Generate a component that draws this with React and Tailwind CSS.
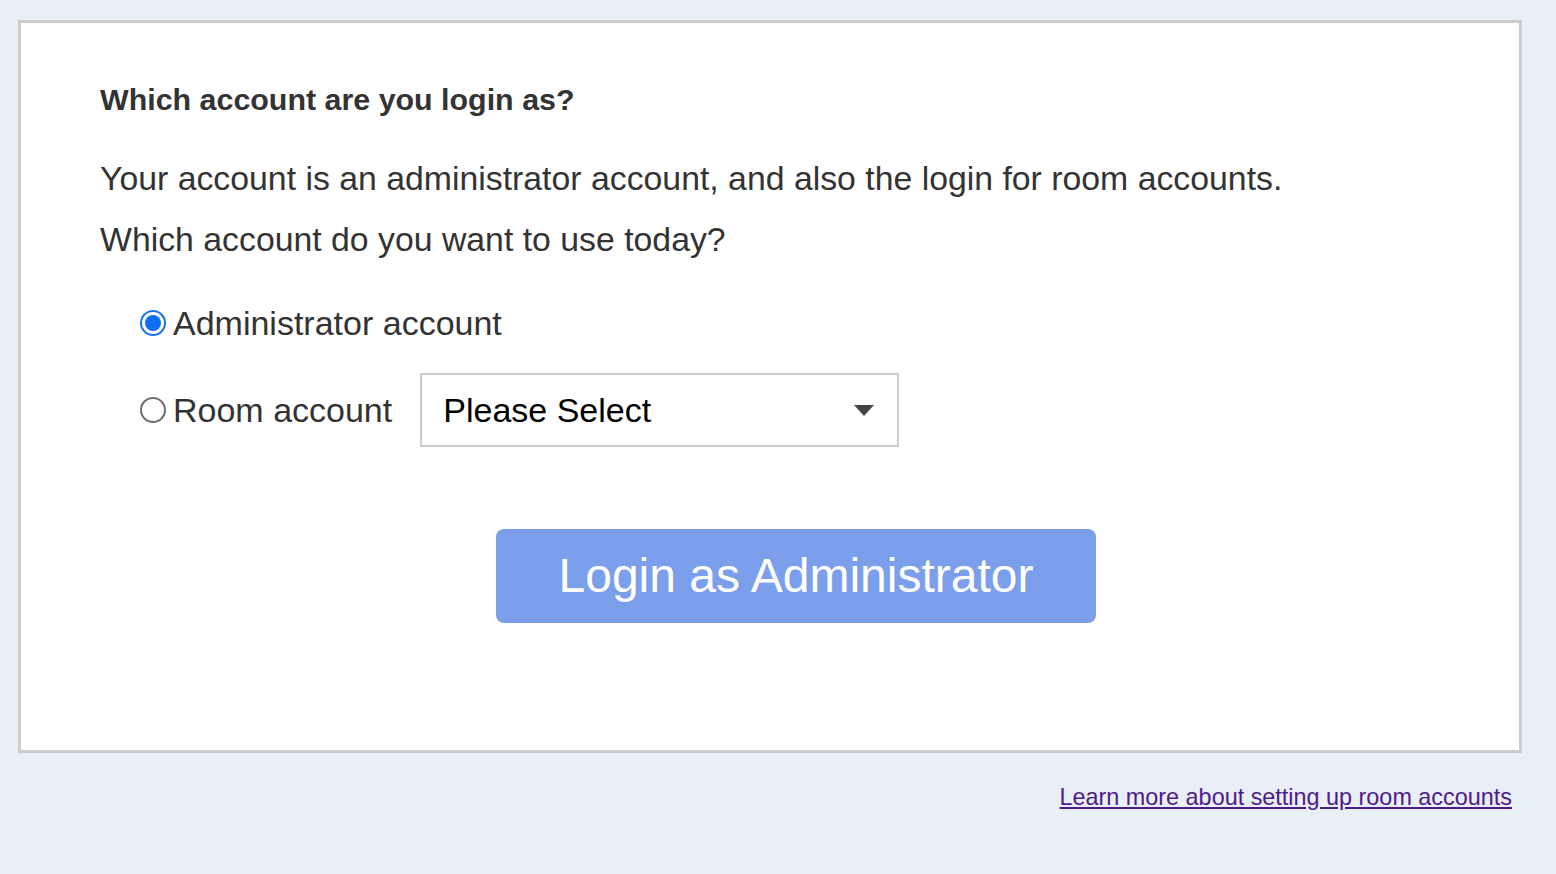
import React, { useState } from "react";

export default function App() {
  const [choice, setChoice] = useState("admin");

  return (
    <div
      className="min-h-screen w-full bg-[#e8eff7] pt-[20px] pl-[18px] pr-[34px]"
      style={{ fontFamily: "'Liberation Sans', Arial, sans-serif" }}
    >
      {/* Card */}
      <div className="h-[733px] border-[3px] border-[#cccccc] bg-white pl-[79px] pt-[60px]">
        <h2 className="text-[30.4px] leading-[32px] font-bold text-[#333333]">
          Which account are you login as?
        </h2>

        <div className="mt-[33px] text-[33.8px] leading-[61px] text-[#333333]">
          <p>Your account is an administrator account, and also the login for room accounts.</p>
          <p>Which account do you want to use today?</p>
        </div>

        <div className="mt-[16px] pl-[40px] flex flex-col gap-[13px]">
          <label className="flex h-[74px] items-center gap-[7px] text-[34px] text-[#333333]">
            <span className="flex h-[26px] w-[26px] items-center justify-center rounded-full border-[2px] border-[#1a73e8] bg-white">
              {choice === "admin" && <span className="h-[16px] w-[16px] rounded-full bg-[#0b6ef5]" />}
            </span>
            <input type="radio" className="hidden" checked={choice === "admin"} onChange={() => setChoice("admin")} />
            Administrator account
          </label>

          <div className="flex h-[74px] items-center">
            <label className="flex items-center gap-[7px] text-[34px] text-[#333333]">
              <span className="flex h-[26px] w-[26px] items-center justify-center rounded-full border-[2px] border-[#6e6e6e] bg-white">
                {choice === "room" && <span className="h-[16px] w-[16px] rounded-full bg-[#0b6ef5]" />}
              </span>
              <input type="radio" className="hidden" checked={choice === "room"} onChange={() => setChoice("room")} />
              Room account
            </label>
            <div className="ml-[28px] flex h-[74px] w-[479px] items-center justify-between border-[2px] border-[#cccccc] bg-white pl-[21px] pr-[23px] text-[34px] text-black">
              <span>Please Select</span>
              <svg width="20" height="11" viewBox="0 0 20 11">
                <path d="M0 0 H20 L10 11 Z" fill="#444444" />
              </svg>
            </div>
          </div>
        </div>

        <div className="mt-[82px] flex">
          <button className="ml-[396px] h-[94px] w-[600px] rounded-[8px] bg-[#7b9fea] text-[48px] text-white">
            Login as Administrator
          </button>
        </div>
      </div>

      <div className="mt-[30px] flex justify-end pr-[10px]">
        <a href="#" className="text-[23.4px] leading-[28px] text-[#4f1a8b] underline">
          Learn more about setting up room accounts
        </a>
      </div>
    </div>
  );
}
